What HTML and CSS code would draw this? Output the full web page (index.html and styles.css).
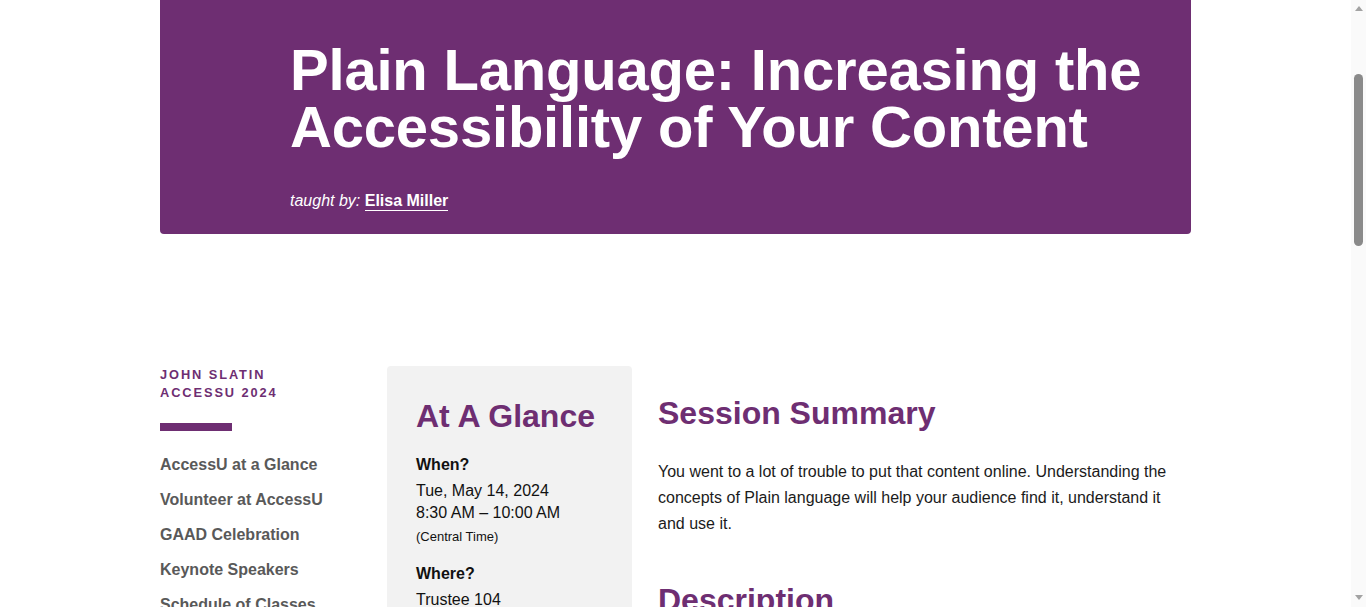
FILE: index.html
```html
<!DOCTYPE html>
<html lang="en">
<head>
<meta charset="utf-8">
<title>Plain Language: Increasing the Accessibility of Your Content</title>
<link rel="stylesheet" href="styles.css">
</head>
<body>
<div class="page">
  <header class="banner">
    <h1 class="title">Plain Language: Increasing the Accessibility of Your Content</h1>
    <p class="taught">taught by: <a class="teacher" href="#">Elisa Miller</a></p>
  </header>

  <div class="layout">
    <aside class="sidebar">
      <p class="site-name">John Slatin<br>AccessU 2024</p>
      <div class="rule"></div>
      <nav class="side-nav">
        <a href="#">AccessU at a Glance</a>
        <a href="#">Volunteer at AccessU</a>
        <a href="#">GAAD Celebration</a>
        <a href="#">Keynote Speakers</a>
        <a href="#">Schedule of Classes</a>
        <a href="#">Registration</a>
      </nav>
    </aside>

    <section class="glance">
      <h2 class="glance-title">At A Glance</h2>
      <h3 class="label">When?</h3>
      <p class="value">Tue, May 14, 2024<br>8:30 AM – 10:00 AM</p>
      <p class="small">(Central Time)</p>
      <h3 class="label">Where?</h3>
      <p class="value">Trustee 104</p>
      <h3 class="label">Track</h3>
      <p class="value">Content</p>
    </section>

    <main class="main">
      <h2 class="section-title">Session Summary</h2>
      <p class="text">You went to a lot of trouble to put that content online. Understanding the concepts of Plain language will help your audience find it, understand it and use it.</p>
      <h2 class="section-title desc">Description</h2>
      <p class="text">Plain language is communication your audience can understand the first time they read or hear it. In this session we will look at what plain language is, why it matters for accessibility, and practical techniques you can use to make your content clearer.</p>
    </main>
  </div>
</div>

<div class="scrollbar" aria-hidden="true">
  <span class="arrow up"></span>
  <span class="thumb"></span>
  <span class="arrow down"></span>
</div>
</body>
</html>
```

FILE: styles.css
```css
html, body {
  margin: 0;
  padding: 0;
  background: #ffffff;
}

body {
  font-family: "Liberation Sans", Arial, sans-serif;
  color: #1b1b1b;
  padding-right: 15px;
  overflow-x: hidden;
}

.page {
  width: 1031px;
  margin: 0 auto;
  padding-bottom: 400px;
}

.banner {
  background: #6e2e72;
  border-radius: 0 0 4px 4px;
  padding: 41px 40px 21px 130px;
  color: #ffffff;
}

.title {
  margin: 0;
  font-size: 58px;
  line-height: 57px;
  font-weight: 700;
  letter-spacing: -0.2px;
}

.taught {
  margin: 34px 0 0;
  font-size: 16px;
  line-height: 24px;
  font-style: italic;
}

.teacher {
  color: #ffffff;
  font-style: normal;
  font-weight: 700;
  text-decoration: none;
  border-bottom: 1px solid #ffffff;
  padding-bottom: 1px;
}

.layout {
  margin-top: 132px;
  display: grid;
  grid-template-columns: 201px 245px 1fr;
  column-gap: 26px;
  align-items: start;
}

.sidebar {
  display: flex;
  flex-direction: column;
}

.site-name {
  margin: 0;
  font-size: 12.8px;
  line-height: 18px;
  font-weight: 700;
  letter-spacing: 0.15em;
  text-transform: uppercase;
  color: #6e2e72;
}

.rule {
  width: 72px;
  height: 8px;
  background: #6e2e72;
  margin-top: 21px;
}

.side-nav {
  display: flex;
  flex-direction: column;
  gap: 13px;
  margin-top: 23px;
}

.side-nav a {
  font-size: 16px;
  line-height: 22px;
  font-weight: 700;
  color: #595959;
  text-decoration: none;
}

.glance {
  background: #f2f2f2;
  border-radius: 4px;
  padding: 31px 29px 30px;
}

.glance-title {
  margin: 0 0 19px;
  font-size: 32px;
  line-height: 38.4px;
  font-weight: 700;
  color: #6e2e72;
}

.label {
  margin: 17px 0 4px;
  font-size: 16px;
  line-height: 22px;
  font-weight: 700;
  color: #111111;
}

.glance-title + .label {
  margin-top: 0;
}

.value {
  margin: 0;
  font-size: 16px;
  line-height: 22px;
  color: #111111;
}

.small {
  margin: 4px 0 0;
  font-size: 13px;
  line-height: 18px;
  color: #111111;
}

.main {
  padding-top: 28px;
}

.section-title {
  margin: 0 0 27px;
  font-size: 32px;
  line-height: 38.4px;
  font-weight: 700;
  color: #6e2e72;
}

.section-title.desc {
  margin-top: 44px;
}

.text {
  margin: 0;
  font-size: 16px;
  line-height: 26px;
  color: #1b1b1b;
  max-width: 515px;
}

/* Browser scrollbar as seen in the screenshot */
.scrollbar {
  position: fixed;
  top: 0;
  right: 0;
  width: 15px;
  height: 100vh;
  background: #fafafa;
  display: flex;
  flex-direction: column;
  align-items: center;
}

.arrow {
  width: 0;
  height: 0;
  border-left: 4.5px solid transparent;
  border-right: 4.5px solid transparent;
}

.arrow.up {
  margin-top: 6px;
  border-bottom: 5px solid #a3a3a3;
}

.thumb {
  margin-top: 63px;
  width: 9px;
  height: 172px;
  border-radius: 5px;
  background: #8a8a8a;
}

.arrow.down {
  margin-top: auto;
  margin-bottom: 7px;
  border-top: 5px solid #a3a3a3;
}
```
